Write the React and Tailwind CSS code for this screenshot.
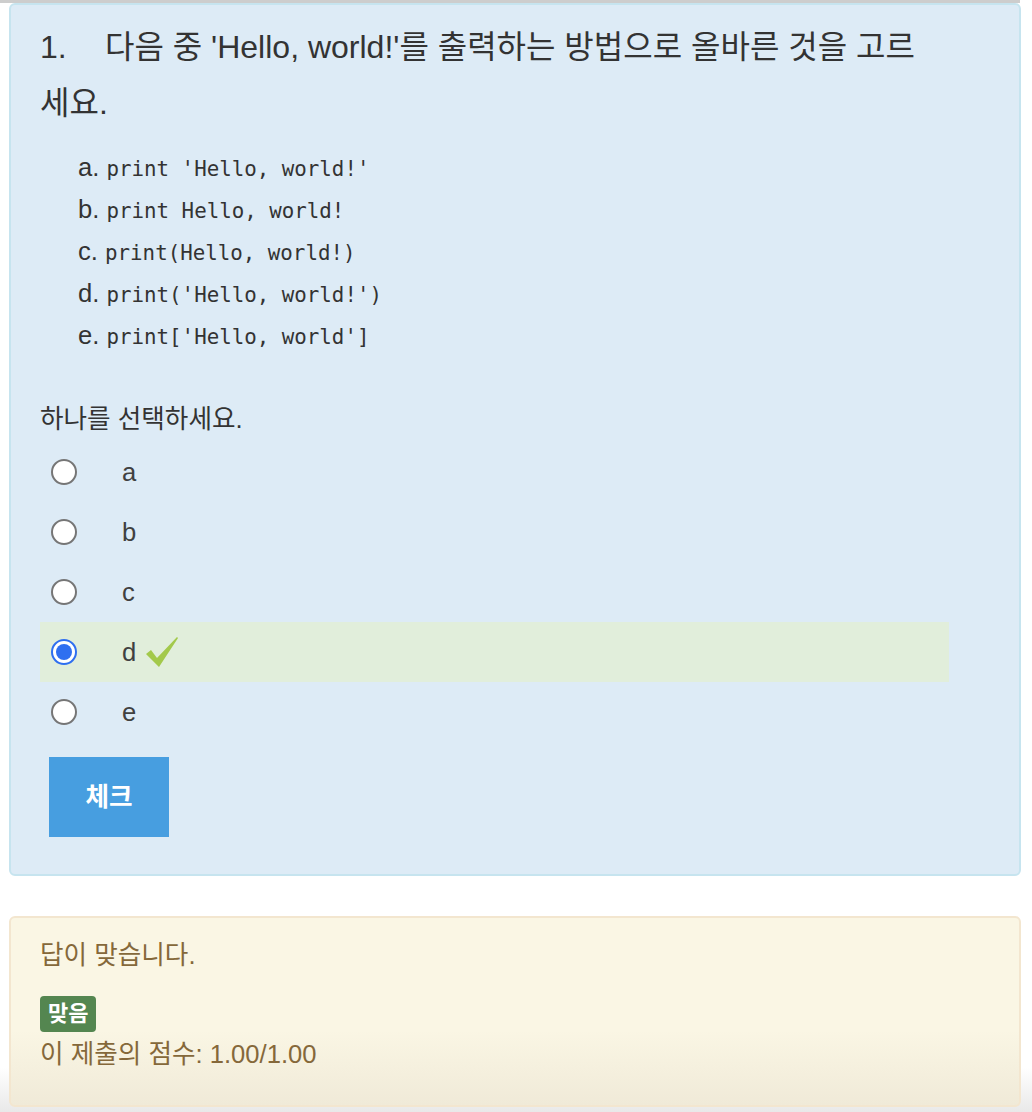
import React from "react";

const options = [
  { key: "a", code: "print 'Hello, world!'" },
  { key: "b", code: "print Hello, world!" },
  { key: "c", code: "print(Hello, world!)" },
  { key: "d", code: "print('Hello, world!')" },
  { key: "e", code: "print['Hello, world']" },
];

const Radio = ({ checked }) => {
  if (checked) {
    return (
      <span className="flex h-[26px] w-[26px] items-center justify-center rounded-full border-2 border-[#2f6ff0] bg-white">
        <span className="h-[16px] w-[16px] rounded-full bg-[#2f6ff0]" />
      </span>
    );
  }
  return <span className="block h-[26px] w-[26px] rounded-full border-2 border-[#767676] bg-white" />;
};

const Check = () => (
  <svg width="33" height="31" viewBox="0 0 33 31" className="ml-[10px]">
    <polygon points="0,17 5,13 11,21 31,0 32,1 13,30" fill="#a3c94b" />
  </svg>
);

export default function App() {
  return (
    <div className="min-h-[1112px] bg-[linear-gradient(to_bottom,#ffffff_0%,#ffffff_96%,#e9e9e9_100%)] font-['Liberation_Sans','Noto_Sans_CJK_KR',sans-serif]">
      <div className="mr-[12px] h-[3px] bg-[#cdcdcd]" />

      <div className="ml-[9px] mr-[11px]">
        {/* question */}
        <div className="rounded-[6px] border-2 border-[#c6e4ef] bg-[#ddebf6] pb-[37px] pl-[29px] pr-[70px] pt-[14px] text-[#333]">
          <div className="mr-[-40px] text-[32px] leading-[56px]">
            <span className="inline-block w-[65px]">1.</span>
            다음 중 'Hello, world!'를 출력하는 방법으로 올바른 것을 고르
            <br />
            세요.
          </div>

          <div className="mt-[15px] pl-[38px] text-[25.6px] leading-[42px]">
            {options.map((o) => (
              <div key={o.key} className="h-[42px] whitespace-pre">
                {o.key}.{" "}
                <span className="font-['DejaVu_Sans_Mono',monospace] text-[20.8px] leading-none">{o.code}</span>
              </div>
            ))}
          </div>

          <div className="mt-[45px] text-[25.6px] leading-[36px]">하나를 선택하세요.</div>

          <div className="mt-[5px] text-[25.6px]">
            {options.map((o) => (
              <div
                key={o.key}
                className={
                  o.key === "d"
                    ? "flex h-[60px] items-center bg-[#e1eedb] pl-[11px]"
                    : "flex h-[60px] items-center pl-[11px]"
                }
              >
                <Radio checked={o.key === "d"} />
                <span className="ml-[45px] text-[#404040]">{o.key}</span>
                {o.key === "d" && <Check />}
              </div>
            ))}
          </div>

          <button className="ml-[9px] mt-[15px] flex h-[80px] w-[120px] items-center justify-center bg-[#479ee0] text-[25.6px] font-bold text-white">
            체크
          </button>
        </div>

        {/* feedback */}
        <div className="mt-[40px] rounded-[6px] border-2 border-[#f3e6cf] bg-[linear-gradient(to_bottom,#faf6e4_0%,#faf6e4_60%,#f0ead8_100%)] pb-[33px] pl-[29px] pt-[19px] text-[25.6px] leading-[36px] text-[#85683a]">
          <div>답이 맞습니다.</div>
          <div className="mt-[23px] flex">
            <span className="flex h-[36px] items-center rounded-[4px] bg-[#548650] px-[8px] text-[22px] font-bold text-white">
              맞음
            </span>
          </div>
          <div className="mt-[4px]">이 제출의 점수: 1.00/1.00</div>
        </div>
      </div>
    </div>
  );
}
